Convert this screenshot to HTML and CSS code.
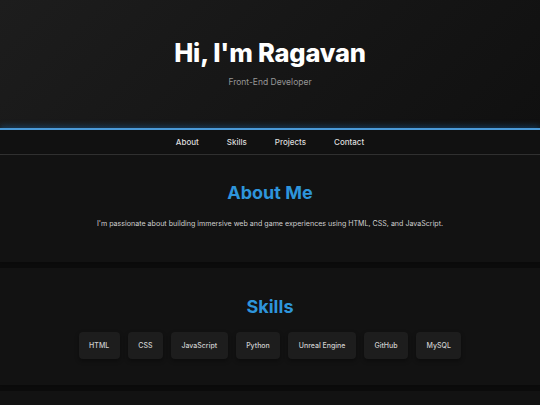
FILE: index.html
```html
<!DOCTYPE html>
<html>
<head>
  <meta charset="UTF-8">
  <title>Ragavan | Portfolio</title>
  <link rel="stylesheet" href="styles.css">
</head>
<body>
  <header class="hero">
    <h1>Hi, I'm Ragavan</h1>
    <p class="tagline">Front-End Developer</p>
  </header>

  <nav class="nav">
    <a href="#about">About</a>
    <a href="#skills">Skills</a>
    <a href="#projects">Projects</a>
    <a href="#contact">Contact</a>
  </nav>

  <main class="content">
    <!-- About -->
    <section class="section about" id="about">
      <h2>About Me</h2>
      <p>I'm passionate about building immersive web and game experiences using HTML, CSS, and JavaScript.</p>
    </section>

    <!-- Skills -->
    <section class="section skills" id="skills">
      <h2>Skills</h2>
      <div class="skill-list">
        <span class="skill">HTML</span>
        <span class="skill">CSS</span>
        <span class="skill">JavaScript</span>
        <span class="skill">Python</span>
        <span class="skill">Unreal Engine</span>
        <span class="skill">GitHub</span>
        <span class="skill">MySQL</span>
      </div>
    </section>

    <section class="section projects" id="projects"></section>
  </main>
</body>
</html>
```

FILE: styles.css
```css
body {
  margin: 0;
  padding: 0;
  background-color: #0c0c0c;
  color: #ccc;
  font-family: Inter, "Open Sans", sans-serif;
}

.hero {
  height: 128px;
  box-sizing: border-box;
  padding-top: 37px;
  text-align: center;
  background: linear-gradient(135deg, #1d1d1d 0%, #151515 60%, #101010 100%);
}

.hero h1 {
  margin: 0;
  font-size: 25.5px;
  font-weight: 800;
  color: #fff;
  letter-spacing: -0.2px;
}

.tagline {
  margin: 9px 0 0;
  font-size: 8.5px;
  font-weight: 400;
  color: #969696;
}

.nav {
  display: flex;
  justify-content: center;
  gap: 28px;
  height: 24px;
  align-items: center;
  background-color: #111;
  border-top: 2px solid #4a9ad8;
  border-bottom: 1px solid #333;
  box-shadow: 0 -2px 6px rgba(30, 140, 230, 0.3);
}

.nav a {
  color: #ddd;
  text-decoration: none;
  font-size: 8px;
  font-weight: 500;
}

.content {
  display: flex;
  flex-direction: column;
  gap: 6px;
}

.section {
  background-color: #121212;
  text-align: center;
  box-shadow: 0 1px 3px rgba(0, 0, 0, 0.25);
}

.section h2 {
  margin: 0;
  font-size: 18px;
  font-weight: 700;
  color: #2e95db;
}

.about {
  height: 107px;
  box-sizing: border-box;
  padding-top: 27px;
}

.about p {
  margin: 16px 0 0;
  font-size: 7.1px;
  color: #d0d0d0;
}

.skills {
  height: 117px;
  box-sizing: border-box;
  padding-top: 28px;
}

.skill-list {
  display: flex;
  justify-content: center;
  gap: 8px;
  margin-top: 15px;
}

.skill {
  display: flex;
  align-items: center;
  height: 27px;
  padding: 0 10.5px;
  border-radius: 4px;
  background-color: #1d1d1d;
  box-shadow: 0 2px 4px rgba(0, 0, 0, 0.35);
  font-size: 7px;
  font-weight: 500;
  color: #cfcfcf;
}

.projects {
  height: 60px;
}
```
